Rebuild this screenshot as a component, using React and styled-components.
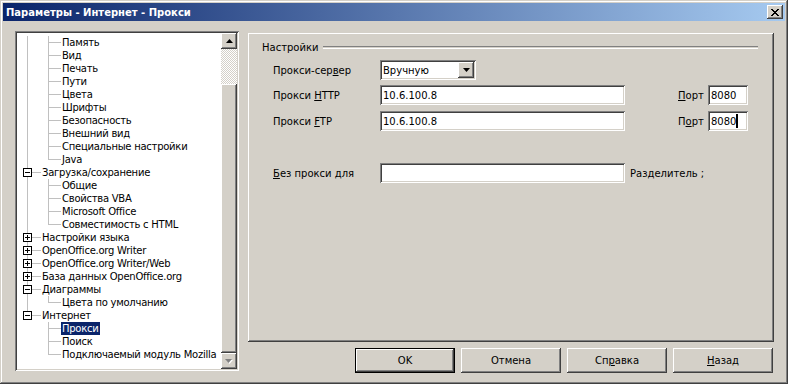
import styled, { createGlobalStyle, css } from 'styled-components';

const GlobalStyle = createGlobalStyle`
  html, body {
    margin: 0;
    padding: 0;
    background: #d4d0c8;
  }
  body {
    font-family: "DejaVu Sans", "Liberation Sans", sans-serif;
    font-size: 10px;
    color: #000;
  }
`;

const raised = css`
  background: #d4d0c8;
  box-shadow: inset -1px -1px #404040, inset 1px 1px #fff, inset -2px -2px #808080,
    inset 2px 2px #d4d0c8;
`;

const sunken = css`
  box-shadow: inset 1px 1px #808080, inset -1px -1px #fff, inset 2px 2px #404040,
    inset -2px -2px #d4d0c8;
`;

const Window = styled.div`
  width: 788px;
  height: 384px;
  box-sizing: border-box;
  padding: 3px;
  display: flex;
  flex-direction: column;
  background: #d4d0c8;
  box-shadow: inset -1px -1px #404040, inset 1px 1px #d4d0c8, inset -2px -2px #808080,
    inset 2px 2px #fff;
`;

const TitleBar = styled.div`
  height: 18px;
  display: flex;
  align-items: center;
  padding: 0 2px 0 3px;
  background: linear-gradient(to right, #0a246a, #a6caf0);
`;

const Title = styled.div`
  flex: 1;
  color: #fff;
  font-weight: bold;
  font-size: 10px;
`;

const CloseButton = styled.div`
  ${raised};
  width: 16px;
  height: 14px;
  display: flex;
  align-items: center;
  justify-content: center;
`;

const Main = styled.div`
  display: flex;
  padding: 10px 0 0 12px;
  gap: 9px;
`;

const TreePanel = styled.div`
  width: 224px;
  height: 340px;
  box-sizing: border-box;
  padding: 2px;
  display: flex;
  background: #fff;
  ${sunken};
`;

const TreeList = styled.div`
  flex: 1;
  padding-top: 3px;
  overflow: hidden;
`;

const TreeRow = styled.div`
  display: flex;
  height: 13px;
  line-height: 13px;
  white-space: nowrap;
  letter-spacing: -0.25px;
`;

const LINE = 'linear-gradient(#c0c0c0, #c0c0c0)';

const guideBg = ({ $w, $x, $v, $h }) => {
  const imgs = [];
  const sizes = [];
  const pos = [];
  if ($v !== 'none') {
    imgs.push(LINE);
    sizes.push($v === 'top' ? '1px 7px' : '1px 13px');
    pos.push(`${$x}px 0`);
  }
  if ($h) {
    imgs.push(LINE);
    sizes.push(`${$w - $x}px 1px`);
    pos.push(`${$x}px 6px`);
  }
  if (!imgs.length) return 'background: none;';
  return `background-image: ${imgs.join(', ')};
    background-size: ${sizes.join(', ')};
    background-position: ${pos.join(', ')};
    background-repeat: no-repeat;`;
};

const Guide = styled.span`
  flex: none;
  width: ${(p) => p.$w}px;
  height: 13px;
  display: flex;
  align-items: center;
  ${guideBg};
`;

const Expander = styled.svg`
  margin-left: 6px;
  display: block;
`;

const ItemText = styled.span`
  padding: 0 1px;
  ${(p) =>
    p.$selected &&
    css`
      background: #0a246a;
      color: #fff;
    `}
`;

const Scrollbar = styled.div`
  width: 16px;
  display: flex;
  flex-direction: column;
`;

const ScrollButton = styled.div`
  ${raised};
  width: 16px;
  height: 16px;
  display: flex;
  align-items: center;
  justify-content: center;
`;

const ScrollTrack = styled.div`
  height: 35px;
  background: repeating-conic-gradient(#fff 0 25%, #d4d0c8 0 50%) 0 0 / 2px 2px;
`;

const ScrollThumb = styled.div`
  ${raised};
  flex: 1;
`;

const PageColumn = styled.div`
  width: 526px;
  margin-top: 2px;
  display: flex;
  flex-direction: column;
  gap: 6px;
`;

const Page = styled.div`
  height: 309px;
  box-sizing: border-box;
  padding: 8px 16px 0 14px;
  box-shadow: inset -1px -1px #404040, inset 1px 1px #fff, inset -2px -2px #808080;
`;

const FixedLine = styled.div`
  display: flex;
  align-items: center;
  height: 13px;
  &::after {
    content: '';
    flex: 1;
    margin-left: 5px;
    height: 1px;
    border-top: 1px solid #808080;
    border-bottom: 1px solid #fff;
  }
`;

const Form = styled.div`
  padding: 6px 0 0 11px;
  display: flex;
  flex-direction: column;
`;

const FormRow = styled.div`
  display: flex;
  align-items: center;
  height: 20px;
  margin-top: ${(p) => p.$gap || 0}px;
`;

const Label = styled.div`
  width: 107px;
  flex: none;
`;

const Field = styled.div`
  ${sunken};
  background: #fff;
  box-sizing: border-box;
  width: ${(p) => p.$w}px;
  height: 20px;
  padding: 0 2px 0 3px;
  display: flex;
  align-items: center;
  white-space: nowrap;
`;

const DropButton = styled.div`
  ${raised};
  margin-left: auto;
  width: 16px;
  height: 16px;
  display: flex;
  align-items: center;
  justify-content: center;
`;

const PortLabel = styled.div`
  margin-left: 53px;
  width: 30px;
`;

const Caret = styled.span`
  display: inline-block;
  width: 2px;
  height: 14px;
  background: #000;
`;

const Hint = styled.div`
  margin-left: 5px;
`;

const ButtonRow = styled.div`
  display: flex;
  justify-content: flex-end;
  gap: 6px;
  padding-right: 1px;
`;

const Button = styled.div`
  ${raised};
  width: 100px;
  height: 25px;
  display: flex;
  align-items: center;
  justify-content: center;
  ${(p) =>
    p.$default &&
    css`
      box-shadow: inset 0 0 0 1px #000, inset -2px -2px #404040, inset 2px 2px #fff,
        inset -3px -3px #808080;
    `}
`;

const Box = ({ open }) => (
  <Expander width="9" height="9" viewBox="0 0 9 9">
    <rect x="0.5" y="0.5" width="8" height="8" fill="#fff" stroke="#000" />
    <path d="M2 4.5h5" stroke="#000" />
    {!open && <path d="M4.5 2v5" stroke="#000" />}
  </Expander>
);

const children = (items, col0) =>
  items.map((text, i) => ({
    text,
    level: 1,
    col0,
    col1: i === items.length - 1 ? 'top' : 'full',
    selected: text === 'Прокси',
  }));

const treeRows = [
  ...children(
    ['Память', 'Вид', 'Печать', 'Пути', 'Цвета', 'Шрифты', 'Безопасность', 'Внешний вид', 'Специальные настройки', 'Java'],
    'full'
  ),
  { text: 'Загрузка/сохранение', level: 0, box: 'open', col0: 'full' },
  ...children(['Общие', 'Свойства VBA', 'Microsoft Office', 'Совместимость с HTML'], 'full'),
  { text: 'Настройки языка', level: 0, box: 'closed', col0: 'full' },
  { text: 'OpenOffice.org Writer', level: 0, box: 'closed', col0: 'full' },
  { text: 'OpenOffice.org Writer/Web', level: 0, box: 'closed', col0: 'full' },
  { text: 'База данных OpenOffice.org', level: 0, box: 'closed', col0: 'full' },
  { text: 'Диаграммы', level: 0, box: 'open', col0: 'full' },
  ...children(['Цвета по умолчанию'], 'full'),
  { text: 'Интернет', level: 0, box: 'open', col0: 'top' },
  ...children(['Прокси', 'Поиск', 'Подключаемый модуль Mozilla'], 'none'),
];

const TreeItem = ({ row }) => (
  <TreeRow>
    {row.level === 0 ? (
      <Guide $w={24} $x={10} $v={row.col0} $h>
        <Box open={row.box === 'open'} />
      </Guide>
    ) : (
      <>
        <Guide $w={24} $x={10} $v={row.col0} />
        <Guide $w={20} $x={7} $v={row.col1} $h />
      </>
    )}
    <ItemText $selected={row.selected}>{row.text}</ItemText>
  </TreeRow>
);

const App = () => (
  <>
    <GlobalStyle />
    <Window>
      <TitleBar>
        <Title>Параметры - Интернет - Прокси</Title>
        <CloseButton>
          <svg width="8" height="7" viewBox="0 0 8 7">
            <path d="M0 0h2v1h-2zM6 0h2v1h-2zM1 1h2v1h-2zM5 1h2v1h-2zM2 2h4v1h-4zM3 3h2v1h-2zM2 4h4v1h-4zM1 5h2v1h-2zM5 5h2v1h-2zM0 6h2v1h-2zM6 6h2v1h-2z" fill="#000" />
          </svg>
        </CloseButton>
      </TitleBar>
      <Main>
        <TreePanel>
          <TreeList>
            {treeRows.map((row) => (
              <TreeItem key={row.text + row.level} row={row} />
            ))}
          </TreeList>
          <Scrollbar>
            <ScrollButton>
              <svg width="7" height="4" viewBox="0 0 7 4">
                <path d="M3.5 0L7 4H0z" fill="#000" />
              </svg>
            </ScrollButton>
            <ScrollTrack />
            <ScrollThumb />
            <ScrollButton>
              <svg width="8" height="5" viewBox="0 0 8 5">
                <path d="M1 1h7L4.5 5z" fill="#fff" />
                <path d="M0 0h7L3.5 4z" fill="#808080" />
              </svg>
            </ScrollButton>
          </Scrollbar>
        </TreePanel>
        <PageColumn>
          <Page>
            <FixedLine>Настройки</FixedLine>
            <Form>
              <FormRow>
                <Label>
                  Прокси-сер<u>в</u>ер
                </Label>
                <Field $w={96}>
                  Вручную
                  <DropButton>
                    <svg width="7" height="4" viewBox="0 0 7 4">
                      <path d="M0 0h7L3.5 4z" fill="#000" />
                    </svg>
                  </DropButton>
                </Field>
              </FormRow>
              <FormRow $gap={5}>
                <Label>
                  Прокси <u>H</u>TTP
                </Label>
                <Field $w={245}>10.6.100.8</Field>
                <PortLabel>
                  <u>П</u>орт
                </PortLabel>
                <Field $w={40}>8080</Field>
              </FormRow>
              <FormRow $gap={6}>
                <Label>
                  Прокси <u>F</u>TP
                </Label>
                <Field $w={245}>10.6.100.8</Field>
                <PortLabel>
                  П<u>о</u>рт
                </PortLabel>
                <Field $w={40}>
                  8080
                  <Caret />
                </Field>
              </FormRow>
              <FormRow $gap={32}>
                <Label>
                  <u>Б</u>ез прокси для
                </Label>
                <Field $w={245} />
                <Hint>Разделитель ;</Hint>
              </FormRow>
            </Form>
          </Page>
          <ButtonRow>
            <Button $default>OK</Button>
            <Button>Отмена</Button>
            <Button>
              Сп<u>р</u>авка
            </Button>
            <Button>
              <u>Н</u>азад
            </Button>
          </ButtonRow>
        </PageColumn>
      </Main>
    </Window>
  </>
);

export default App;
